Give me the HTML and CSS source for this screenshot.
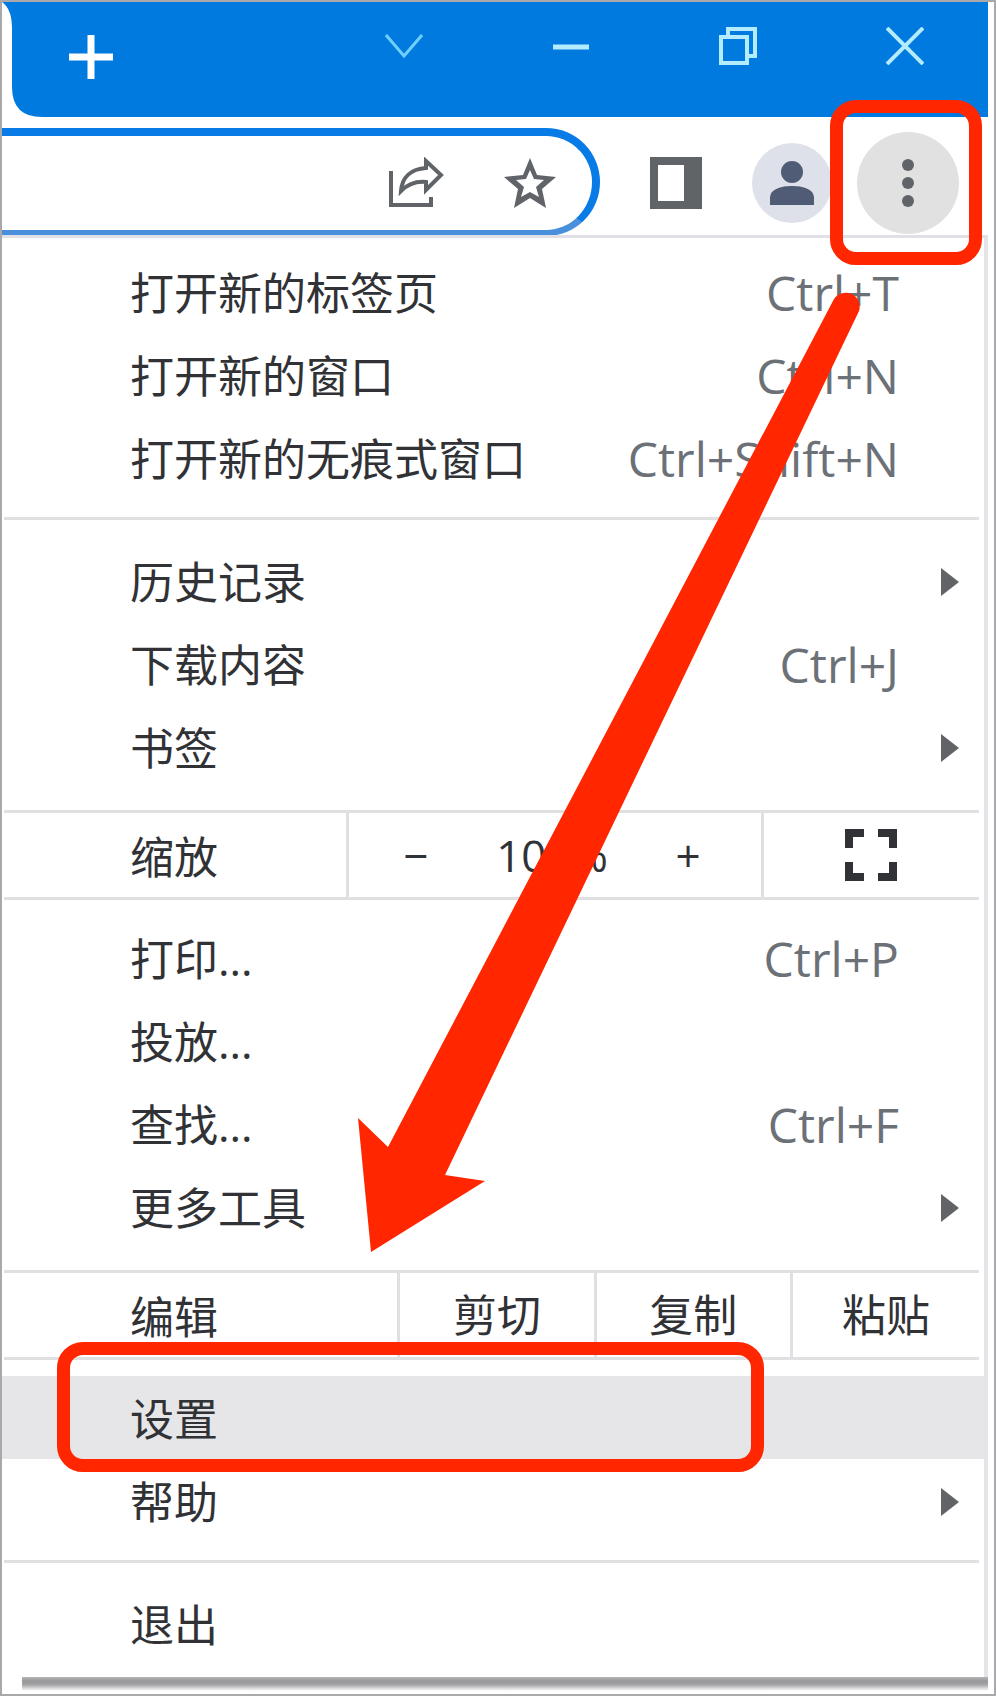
FILE: index.html
```html
<!DOCTYPE html>
<html lang="zh-CN">
<head>
    <meta charset="UTF-8">
    <meta name="viewport" content="width=device-width, initial-scale=1.0">
    <title>浏览器菜单</title>
    <link rel="stylesheet" href="styles.css">
</head>
<body>
    <div class="window">
        <header class="titlebar">
            <svg class="tab-edge" viewBox="0 0 40 115" aria-hidden="true"><path d="M0 0C7 5 10 14 10 26V85Q10 115 40 115H0Z"/></svg>
            <button type="button" class="new-tab" aria-label="新标签页">
                <svg width="44" height="44" viewBox="0 0 44 44"><path d="M22 0V44M0 22H44" stroke-width="7"/></svg>
            </button>
            <div class="window-buttons">
                <button type="button" aria-label="搜索标签页">
                    <svg class="thin" width="38" height="38" viewBox="0 0 38 38"><path d="M1 8L19 29L37 8" stroke-width="3"/></svg>
                </button>
                <button type="button" aria-label="最小化">
                    <svg class="pale" width="38" height="38" viewBox="0 0 38 38"><path d="M1 20H37" stroke-width="5"/></svg>
                </button>
                <button type="button" aria-label="还原">
                    <svg class="pale" width="38" height="38" viewBox="0 0 38 38"><path d="M2 10H28V36H2ZM9 10V2H36V29H28" stroke-width="4"/></svg>
                </button>
                <button type="button" aria-label="关闭">
                    <svg class="pale" width="38" height="38" viewBox="0 0 38 38"><path d="M1 1L37 37M37 1L1 37" stroke-width="4"/></svg>
                </button>
            </div>
        </header>

        <div class="toolbar">
            <div class="address">
                <input type="text" aria-label="地址栏">
                <button type="button" aria-label="分享">
                    <svg width="56" height="52" viewBox="0 0 56 52"><path d="M3 14V48H43V40" stroke-width="4"/><path d="M38 4V11C23 12 14 20 13 34C20 27 28 24 38 25V33L53 18Z" stroke-width="4"/></svg>
                </button>
                <button type="button" aria-label="收藏">
                    <svg class="star" width="52" height="50" viewBox="0 0 52 50"><path fill-rule="evenodd" d="M26 0L33 17L52 19L38 31L42 50L26 40L10 50L14 31L0 19L19 17ZM26 12L22 21L12 22L20 29L17 39L26 34L35 39L32 29L40 22L30 21Z"/></svg>
                </button>
            </div>
            <div class="tools">
                <button type="button" aria-label="侧边栏">
                    <svg width="52" height="52" viewBox="0 0 52 52"><path class="solid" fill-rule="evenodd" d="M0 0H52V52H0ZM8 8V44H34V8Z"/></svg>
                </button>
                <button type="button" class="avatar" aria-label="个人资料">
                    <svg width="46" height="46" viewBox="0 0 46 46"><circle cx="23" cy="12" r="11"/><path d="M1 45V38C1 29 12 26 23 26S45 29 45 38V45Z"/></svg>
                </button>
                <button type="button" class="more" aria-label="更多">
                    <svg width="12" height="48" viewBox="0 0 12 48"><circle cx="6" cy="6" r="6"/><circle cx="6" cy="24" r="6"/><circle cx="6" cy="42" r="6"/></svg>
                    <span class="mark mark-more"></span>
                </button>
            </div>
        </div>

        <nav class="menu">
            <div class="group first">
                <button type="button" class="item"><span>打开新的标签页</span><kbd>Ctrl+T</kbd></button>
                <button type="button" class="item"><span>打开新的窗口</span><kbd>Ctrl+N</kbd></button>
                <button type="button" class="item"><span>打开新的无痕式窗口</span><kbd>Ctrl+Shift+N</kbd></button>
            </div>
            <div class="group before-strip">
                <button type="button" class="item"><span>历史记录</span><i class="arrow"></i></button>
                <button type="button" class="item"><span>下载内容</span><kbd>Ctrl+J</kbd></button>
                <button type="button" class="item"><span>书签</span><i class="arrow"></i></button>
            </div>
            <div class="strip zoom">
                <span class="label">缩放</span>
                <div class="cell zoom-level">
                    <button type="button" aria-label="缩小">−</button>
                    <span>100%</span>
                    <button type="button" aria-label="放大">+</button>
                </div>
                <button type="button" class="cell" aria-label="全屏">
                    <svg width="52" height="52" viewBox="0 0 52 52"><path d="M4 19V4H19M33 4H48V19M48 33V48H33M19 48H4V33" stroke-width="8"/></svg>
                </button>
            </div>
            <div class="group after-strip before-strip">
                <button type="button" class="item"><span>打印...</span><kbd>Ctrl+P</kbd></button>
                <button type="button" class="item"><span>投放...</span></button>
                <button type="button" class="item"><span>查找...</span><kbd>Ctrl+F</kbd></button>
                <button type="button" class="item"><span>更多工具</span><i class="arrow"></i></button>
            </div>
            <div class="strip edit">
                <span class="label">编辑</span>
                <button type="button" class="cell">剪切</button>
                <button type="button" class="cell">复制</button>
                <button type="button" class="cell">粘贴</button>
            </div>
            <div class="group after-strip">
                <button type="button" class="item active"><span>设置</span><b class="mark mark-settings"></b></button>
                <button type="button" class="item"><span>帮助</span><i class="arrow"></i></button>
            </div>
            <div class="group last">
                <button type="button" class="item"><span>退出</span></button>
            </div>
            <svg class="pointer" width="520" height="980" viewBox="0 0 520 980" aria-hidden="true"><path d="M30 867L476 19A14 14 0 0 1 501 31L87 895L127 901L13 972L0 838Z"/></svg>
        </nav>
        <div class="menu-shadow"></div>
    </div>
</body>
</html>
```
FILE: styles.css
```css
* {
    box-sizing: border-box;
}
body {
    margin: 0;
    background-color: #fff;
    color: #303236;
    font-family: "Open Sans", "Noto Sans CJK SC", sans-serif;
    font-size: 44px;
}
button {
    display: flex;
    align-items: center;
    justify-content: center;
    margin: 0;
    padding: 0;
    border: none;
    background: none;
    color: inherit;
    font: inherit;
    cursor: pointer;
}
svg {
    display: block;
    fill: none;
    stroke: currentColor;
}
.window {
    min-height: 100vh;
    padding-right: 6px;
    border: 2px solid #a9a9ab;
}

/* title bar */
.titlebar {
    display: flex;
    height: 115px;
    background-color: #007adf;
    color: #fff;
}
.tab-edge {
    width: 40px;
    height: 115px;
    fill: #fff;
    stroke: none;
}
.new-tab {
    width: 98px;
    height: 110px;
}
.window-buttons {
    display: flex;
    margin-left: auto;
}
.window-buttons button {
    width: 167px;
    height: 88px;
}
.thin {
    color: #6fd0ff;
}
.pale {
    color: #b4ecff;
}

/* toolbar */
.toolbar {
    display: flex;
    align-items: center;
    height: 118px;
    padding-top: 11px;
    color: #606367;
}
.address {
    display: flex;
    flex: 1;
    align-items: center;
    gap: 60px;
    min-width: 0;
    height: 108px;
    padding-right: 36px;
    border: 8px solid #087be6;
    border-bottom: 6px solid #4a8fdb;
    border-left: none;
    border-radius: 0 54px 54px 0;
}
.address input {
    flex: 1;
    min-width: 0;
    border: none;
    outline: none;
    background: none;
    font: inherit;
}
.star {
    fill: currentColor;
    stroke: none;
}
.tools {
    display: flex;
    align-items: center;
    gap: 25px;
    margin-right: 29px;
    padding: 3px 0 0 50px;
}
.solid {
    fill: currentColor;
    stroke: none;
}
.avatar {
    width: 80px;
    height: 80px;
    margin-left: 25px;
    border-radius: 50%;
    background-color: #dfe1ea;
    color: #505c76;
}
.more {
    position: relative;
    z-index: 1;
    width: 102px;
    height: 102px;
    border-radius: 50%;
    background-color: #e1e1e1;
}
.avatar svg,
.more svg {
    fill: currentColor;
    stroke: none;
}

/* menu */
.menu {
    position: relative;
    padding: 0 5px 0 2px;
    border-top: 3px solid #e0e0e6;
    border-right: 4px solid #e3e3e8;
}
.group {
    padding: 19px 0 18px;
    border-bottom: 3px solid #e0e0e2;
}
.group.first {
    padding-top: 12px;
}
.group.before-strip {
    padding-bottom: 22px;
}
.group.after-strip {
    padding-top: 16px;
}
.group.last {
    padding-bottom: 12px;
    border-bottom: none;
}
.item {
    position: relative;
    justify-content: space-between;
    width: 100%;
    height: 83px;
    padding: 3px 80px 0 126px;
    line-height: 60px;
}
.item.active {
    background-color: #e6e6e8;
    box-shadow: 5px 0 #e6e6e8, -2px 0 #e6e6e8;
}
kbd {
    color: #6c7077;
    font-family: "Open Sans", sans-serif;
    font-size: 48px;
}
.arrow {
    width: 18px;
    height: 28px;
    margin-right: -60px;
    background-color: #626366;
    clip-path: polygon(0 0, 100% 50%, 0 100%);
}
.strip {
    display: grid;
    height: 87px;
    border-bottom: 3px solid #e0e0e2;
}
.strip.zoom {
    grid-template-columns: 342fr 414fr 218fr;
}
.strip.edit {
    grid-template-columns: 393fr 196fr 196fr 189fr;
}
.label {
    align-self: center;
    padding: 3px 0 0 126px;
    line-height: 60px;
}
.cell {
    border-left: 3px solid #e0e0e4;
    line-height: 60px;
}
.zoom-level {
    display: flex;
    align-items: center;
    justify-content: space-between;
    padding: 0 60px 0 54px;
}
.menu-shadow {
    height: 14px;
    margin-left: 20px;
    background: linear-gradient(#b5b5b7, #98989a 30%, #a5a5a7 55%, #fff);
}

/* red highlights */
.mark {
    position: absolute;
    border: 13px solid #ff2600;
    border-radius: 26px;
    pointer-events: none;
}
.mark-more {
    top: -32px;
    right: -23px;
    width: 152px;
    height: 165px;
}
.mark-settings {
    top: -34px;
    left: 53px;
    width: 707px;
    height: 130px;
}
.pointer {
    position: absolute;
    top: 42px;
    left: 356px;
    fill: #ff2600;
    stroke: none;
    pointer-events: none;
}
```
